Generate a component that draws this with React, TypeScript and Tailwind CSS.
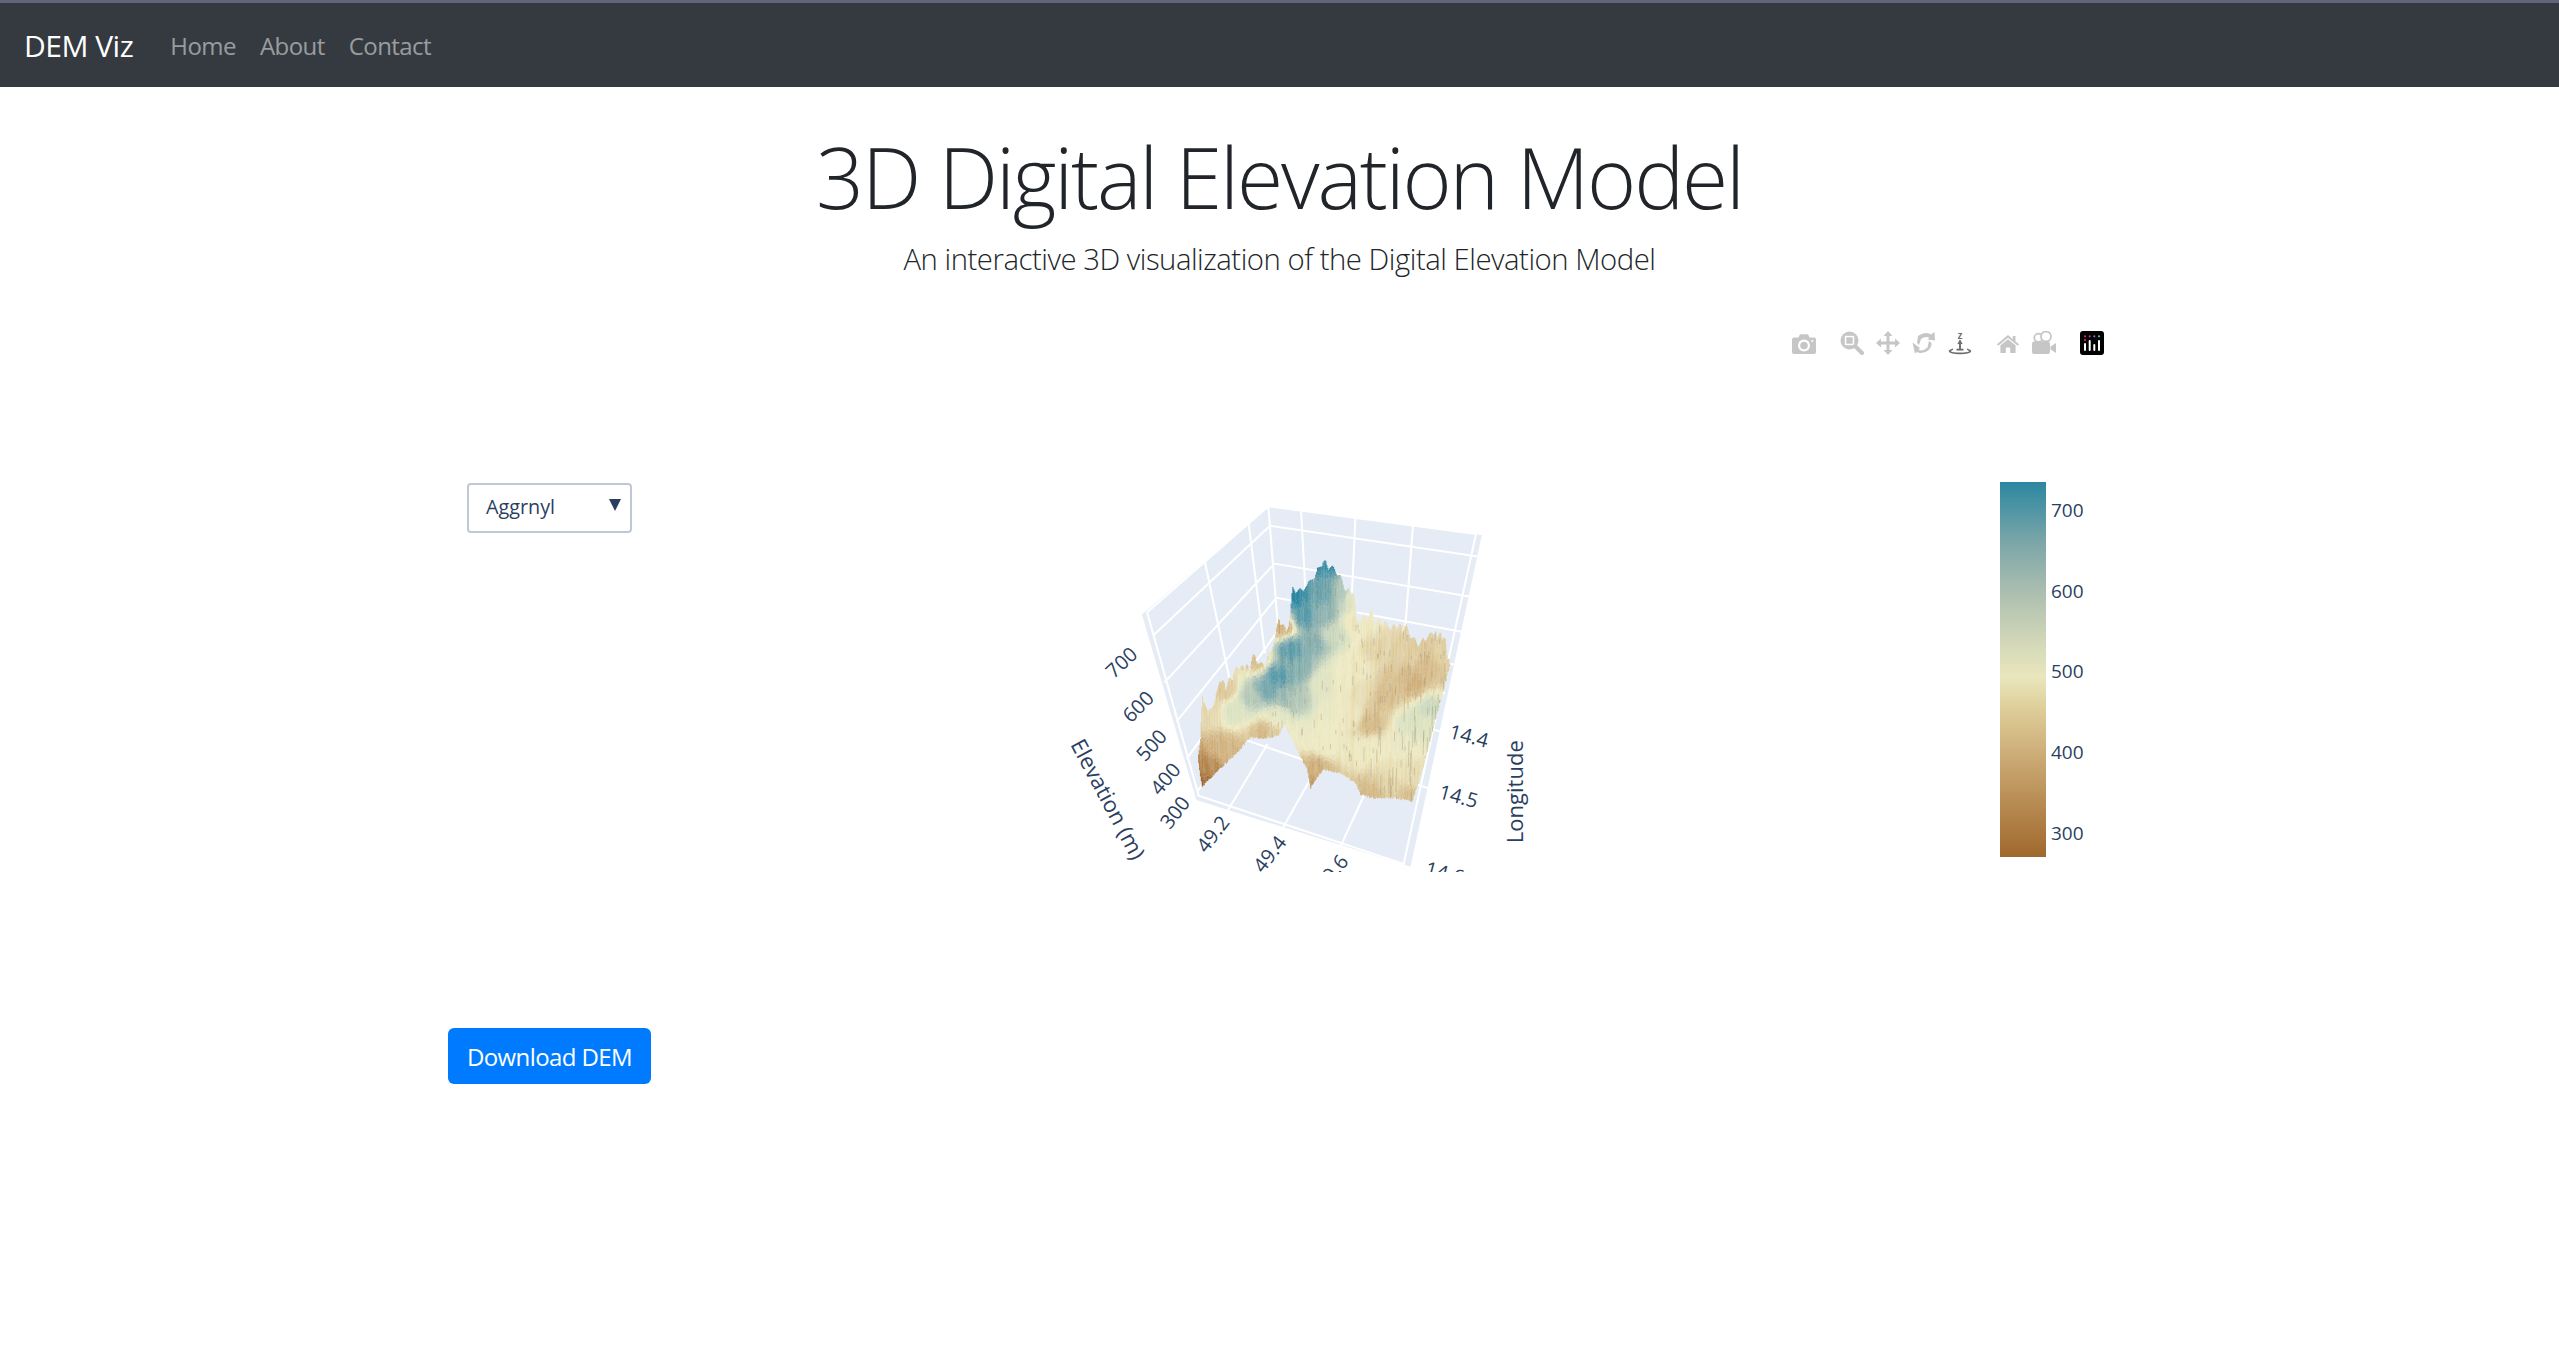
import React from "react";

type P = [number, number];
const topPts: P[] = [[488,800],[498,760],[505,625],[520,680],[540,650],[555,585],[575,590],[600,550],[640,535],[655,500],[670,535],[690,520],[715,455],[725,390],[745,435],[757,390],[765,308],[790,315],[810,295],[830,265],[850,222],[870,240],[890,255],[915,310],[935,318],[945,405],[965,390],[980,375],[1000,400],[1040,420],[1080,420],[1110,470],[1135,460],[1160,438],[1195,448],[1220,538]];
const botPts: P[] = [[488,830],[500,912],[540,870],[600,810],[640,765],[680,768],[720,760],[740,725],[770,790],[805,860],[815,915],[850,860],[900,870],[945,900],[960,935],[1000,945],[1060,945],[1110,955],[1140,860],[1170,740],[1220,545]];
const anchors: [number, number, number][] = [
  [770,340,1],[850,240,.97],[800,400,.9],[850,330,.86],[900,330,.72],[850,400,.78],[720,580,.9],[690,620,.84],[640,640,.68],[600,680,.58],[760,500,.88],[820,480,.8],[880,450,.62],[780,560,.8],[740,640,.76],[770,650,.7],[850,600,.56],[915,560,.5],[900,600,.51],
  [800,750,.52],[860,780,.5],[720,700,.54],[930,340,.56],[940,420,.48],[950,560,.48],[880,680,.51],[930,700,.48],[960,620,.44],
  [1000,500,.4],[1040,600,.33],[1100,600,.27],[1090,500,.38],[1150,550,.32],[1200,520,.4],[985,720,.3],[1020,640,.32],
  [1150,680,.62],[1100,720,.58],[1150,720,.56],[1080,780,.52],[1000,790,.49],[1060,860,.45],[950,800,.49],[1040,900,.4],[990,930,.3],[1120,880,.44],[1100,940,.33],
  [830,860,.27],[820,900,.2],[700,750,.38],[680,750,.3],[560,800,.28],[520,850,.12],[500,900,.0],[735,430,.28],[660,530,.32],[570,620,.36],[515,680,.42],
];
const stops: [number, number[]][] = [[0,[160,104,44]],[.25,[205,170,116]],[.5,[240,235,195]],[.6,[215,224,192]],[.72,[172,194,180]],[.85,[110,163,170]],[1,[43,135,161]]];
function col(e: number): number[] {
  e = Math.max(0, Math.min(1, e));
  for (let i = 1; i < stops.length; i++) {
    if (e <= stops[i][0]) {
      const t = (e - stops[i-1][0]) / (stops[i][0] - stops[i-1][0]);
      return stops[i-1][1].map((c, k) => c + (stops[i][1][k] - c) * t);
    }
  }
  return stops[stops.length-1][1];
}
function lerp(pts: P[], x: number) {
  for (let i = 1; i < pts.length; i++) if (x <= pts[i][0]) {
    const t = (x - pts[i-1][0]) / (pts[i][0] - pts[i-1][0]);
    return pts[i-1][1] + (pts[i][1] - pts[i-1][1]) * t;
  }
  return pts[pts.length-1][1];
}
function field(x: number, y: number) {
  let a = 0, b = 0;
  for (const [ax, ay, v] of anchors) {
    const d = (ax-x)*(ax-x) + (ay-y)*(ay-y) + 120;
    const w = 1 / Math.pow(d, 2);
    a += w * v; b += w;
  }
  return a / b;
}
function buildSurface() {
  let s = 12345;
  const rnd = () => { s = (s * 16807) % 2147483647; return s / 2147483647; };
  const buckets = new Map<string, string[]>();
  const streaks: string[] = [];
  const add = (key: string, d: string) => { const b = buckets.get(key); if (b) b.push(d); else buckets.set(key, [d]); };
  const colorOf = (e: number) => {
    const q = Math.round(e * 60) / 60;
    const c = col(q).map((v) => Math.round(v));
    return `rgb(${c[0]},${c[1]},${c[2]})`;
  };
  let spikeStart = 490, spikeW = 20, spikeA = 20;
  for (let x = 490; x < 1220; x += 2.6) {
    if (x > spikeStart + spikeW) { spikeStart = x; spikeW = 10 + rnd() * 14; spikeA = 8 + rnd() * 24; }
    const f = (x - spikeStart) / spikeW;
    const top = lerp(topPts, x) + Math.abs(f - .5) * 2 * spikeA + rnd() * 3;
    const bot = lerp(botPts, x) - rnd() * 7;
    if (bot - top < 2) continue;
    const tilt = x > 860 ? (x - 860) / 2200 : (x - 860) / 5000;
    const jitter = (rnd() - .5) * .05;
    const xAt = (yy: number) => x + (bot - yy) * tilt * .25;
    let y = top;
    while (y < bot) {
      const y2 = Math.min(bot, y + 9 + rnd() * 9);
      const e = field(x, (y + y2) / 2) + jitter + (rnd() - .5) * .012;
      add(colorOf(e), `M${xAt(y).toFixed(1)} ${y.toFixed(1)}L${xAt(y2).toFixed(1)} ${y2.toFixed(1)}`);
      y = y2;
    }
    const n = x > 900 ? 2 : x > 700 ? 1 : 0;
    for (let i = 0; i < n; i++) {
      if (rnd() > .55) continue;
      const y1 = top + rnd() * (bot - top);
      const y3 = Math.min(bot, y1 + 10 + rnd() * (x > 960 && y1 > 640 ? 70 : 18));
      streaks.push(`M${xAt(y1).toFixed(1)} ${y1.toFixed(1)}L${xAt(y3).toFixed(1)} ${y3.toFixed(1)}`);
    }
  }
  return { paths: Array.from(buckets.entries()).map(([c, d]) => ({ c, d: d.join("") })), streaks: streaks.join("") };
}
const surface = buildSurface();

const gridLines = [
  "M340 388L490 935L1085 1138L1295 155L692 72L340 388",
  "M697 130L360 455","M710 243L390 598","M715 345L425 715","M722 440L455 825","M730 535L485 925",
  "M697 130L1300 222","M710 243L1280 342","M715 345L1258 447","M722 440L1235 545","M730 535L1205 630",
  "M635 125L682 510","M508 238L590 640","M692 72L730 560",
  "M787 83L800 330","M945 105L935 330","M1112 130L1090 430",
  "M575 978L690 780","M735 1030L850 820","M903 1083L985 900",
  "M630 770L800 830","M1155 912L1100 895","M1197 745L1160 735",
];
const ticks: [string, number, number, number][] = [
  ["700",265,529,-43],["600",313,657,-45],["500",352,769,-48],["400",392,867,-50],["300",420,964,-52],
  ["49.2",530,1027,-52],["49.4",695,1085,-52],["49.6",875,1140,-52],
  ["14.4",1275,742,15],["14.5",1245,917,15],["14.6",1205,1140,15],
];

function Scene() {
  return (
    <svg viewBox="0 0 1568 1138" className="block w-[540px] h-[392px]">
      <g transform="translate(0 6) scale(1 .974)">
        <polygon points="325,395 692,72 1312,158 1105,1147 483,948" fill="#e5ecf6" />
        <path d={gridLines.join("")} fill="none" stroke="#ffffff" strokeWidth="6" />
        {surface.paths.map((b) => <path key={b.c} d={b.d} stroke={b.c} strokeWidth="3.4" fill="none" />)}
        <path d={surface.streaks} stroke="#8a7a5c" strokeOpacity=".55" strokeWidth="1.5" fill="none" />
      </g>
      <g fill="#2a3f5f" fontFamily="'Open Sans', sans-serif" fontSize="58" textAnchor="middle" dominantBaseline="central">
        {ticks.map(([t, x, y, r]) => <text key={t} transform={`translate(${x} ${y}) rotate(${r})`}>{t}</text>)}
        <text fontSize="64" transform="translate(1405 905) rotate(-90)">Longitude</text>
        <text fontSize="64" transform="translate(230 925) rotate(62)">Elevation (m)</text>
      </g>
    </svg>
  );
}

const Ic = ({ children, vb = "0 0 24 24" }: { children: React.ReactNode; vb?: string }) => (
  <svg viewBox={vb} className="block w-6 h-6 shrink-0">{children}</svg>
);
const G = "#c6c6c6";
const Camera = () => (
  <Ic><path fill={G} d="M2 6.5Q0 6.5 0 8.5V21Q0 23 2 23H22Q24 23 24 21V8.5Q24 6.5 22 6.5H17.5L16 3.2H8L6.5 6.5Z"/><circle cx="12" cy="14.5" r="6" fill="#fff"/><circle cx="12" cy="14.5" r="3.8" fill={G}/><circle cx="20.3" cy="10" r="1" fill="#fff"/></Ic>
);
const Zoom = () => (
  <Ic><circle cx="9.5" cy="9.5" r="9" fill={G}/><rect x="4.8" y="4.8" width="9.4" height="9.4" fill="#fff"/><rect x="6.3" y="6.3" width="6.4" height="6.4" fill={G}/><path d="M15 15L22 22" stroke={G} strokeWidth="4" strokeLinecap="round"/></Ic>
);
const Pan = () => (
  <Ic><path fill={G} d="M12 0L16.5 5H13.5V10.5H19V7.5L24 12L19 16.5V13.5H13.5V19H16.5L12 24L7.5 19H10.5V13.5H5V16.5L0 12L5 7.5V10.5H10.5V5H7.5Z"/></Ic>
);
const Orbit = () => (
  <Ic><path fill={G} d="M6 5Q13 0 19 3.5L22.5 1L23 9.5L15.5 8.5L17.5 6.5Q13 5 9 8L7 14L5 12Z"/><path fill={G} d="M0.5 11.5L8 17L6.5 19Q11 20.5 15.5 16.5L17 10L19.5 12Q20 17 14.5 20.5Q9 23 5 21L3 22.5Z"/></Ic>
);
const Turntable = () => (
  <Ic>
    <text x="12" y="7.6" textAnchor="middle" fontSize="10" fontWeight="700" fontFamily="'Liberation Sans', sans-serif" fill="#6f6f6f">z</text>
    <path d="M12 9.5L12 19" stroke="#6f6f6f" strokeWidth="2"/><path d="M12 8.6L9.3 13H14.7Z" fill="#6f6f6f"/><path d="M8.5 17.7H15.5V19.6H8.5Z" fill="#6f6f6f"/>
    <path d="M5 17.5C1.8 18.3 .8 19.4 .8 20.2C.8 22 6 23.2 12 23.2C18 23.2 23.2 22 23.2 20.2C23.2 19.4 22.2 18.3 19 17.5L19 19C20.6 19.4 21 19.9 21 20.2C21 20.9 17 21.5 12 21.5C7 21.5 3 20.9 3 20.2C3 19.9 3.4 19.4 5 19Z" fill="#6f6f6f"/>
  </Ic>
);
const Home = () => (
  <Ic vb="0 0 22 24"><path fill={G} d="M11 4L0 13.2L1.2 14.8L11 6.8L20.8 14.8L22 13.2L18.5 10.4V5H15.8V8.2Z"/><path fill={G} d="M11 8.2L3.4 14.3V22H8.8V16.4H13.2V22H18.6V14.3Z"/></Ic>
);
const Video = () => (
  <Ic><circle cx="6.5" cy="6.8" r="4.2" fill="#fff" stroke={G} strokeWidth="1.8"/><circle cx="14" cy="5.5" r="5" fill="#fff" stroke={G} strokeWidth="1.8"/><path fill={G} d="M2 10.5H16Q18 10.5 18 12.5V21Q18 23 16 23H2Q0 23 0 21V12.5Q0 10.5 2 10.5Z"/><path fill={G} d="M18.5 15.5L24 12V22L18.5 18.5Z"/></Ic>
);
const Logo = () => (
  <Ic>
    <rect width="24" height="24" rx="3" fill="#000"/>
    <g fill="#e0245f"><circle cx="5" cy="5.3" r="1.1"/><circle cx="5" cy="9" r="1.1"/></g>
    <circle cx="9.7" cy="5.3" r="1.1" fill="#c92c8a"/><circle cx="14.3" cy="5.3" r="1.1" fill="#8a66d8"/><circle cx="19" cy="5.3" r="1.1" fill="#3fc0e0"/>
    <g fill="#fff"><rect x="4" y="12" width="2" height="8" rx="1"/><rect x="8.7" y="9" width="2" height="11" rx="1"/><rect x="13.3" y="13" width="2" height="7" rx="1"/><rect x="18" y="9" width="2" height="11" rx="1"/></g>
  </Ic>
);

const cbLabels = ["700", "600", "500", "400", "300"];

export default function App() {
  return (
    <div className="min-h-[1348px] bg-white text-[#212529] font-['Open_Sans',sans-serif] overflow-hidden">
      <nav className="h-[87px] bg-[#343a40] border-t-[3px] border-[#63637a] flex items-center pl-6 pt-[1px]">
        <a className="text-white text-[30px] tracking-[-0.5px] mr-[37px]">DEM Viz</a>
        <div className="flex gap-[24px] text-[24px] tracking-[-0.55px] text-[#ffffff80]">
          <a>Home</a>
          <a>About</a>
          <a>Contact</a>
        </div>
      </nav>

      <header className="text-center pt-[42px]">
        <h1 className="font-light text-[84px] leading-[96px] tracking-[-2.15px] text-[#212529]">3D Digital Elevation Model</h1>
        <p className="font-light text-[29.3px] leading-[40px] tracking-[-0.47px] mt-[14px] text-[#212529]">An interactive 3D visualization of the Digital Elevation Model</p>
      </header>

      <section className="flex pl-[448px] mt-[31px]">
        <div className="w-[203px] flex flex-col items-center shrink-0 pt-[173px]">
          <div className="relative w-[165px] h-[50px] bg-white border-2 border-[#bec8d9] rounded-[4px] flex items-center pl-[17px] pb-[2px] text-[19.8px] text-[#2a3f5f]">
            Aggrnyl
            <span className="absolute right-[9px] top-[14px] w-0 h-0 border-l-[6px] border-r-[6px] border-t-[12px] border-l-transparent border-r-transparent border-t-[#2a3f5f]" />
          </div>
          <button className="mt-[495px] w-[203px] h-[56px] pt-[2px] bg-[#007bff] rounded-[6px] text-white text-[24px] tracking-[-0.6px]">Download DEM</button>
        </div>

        <div className="w-[1459px] pt-[21px]">
          <div className="flex justify-end gap-[24px] pr-[6px]">
            <Camera />
            <div className="flex gap-[12px]"><Zoom /><Pan /><Orbit /><Turntable /></div>
            <div className="flex gap-[12px]"><Home /><Video /></div>
            <Logo />
          </div>
          <div className="flex mt-[125px] ml-[379px]">
            <Scene />
            <div className="ml-[430px] mt-[2px] flex">
              <div className="w-[46px] h-[375px] bg-[linear-gradient(to_top,#a0682c_0%,#c9a670_25%,#dfcf9b_40%,#e9e6bd_48%,#d8dcb9_55%,#aebfb0_70%,#7ba6a8_84%,#2b87a1_100%)]" />
              <div className="ml-[5px] pt-[16px] flex flex-col gap-[55px] text-[19px] leading-[25.7px] text-[#2a3f5f]">
                {cbLabels.map((l) => <span key={l}>{l}</span>)}
              </div>
            </div>
          </div>
        </div>
      </section>
    </div>
  );
}
